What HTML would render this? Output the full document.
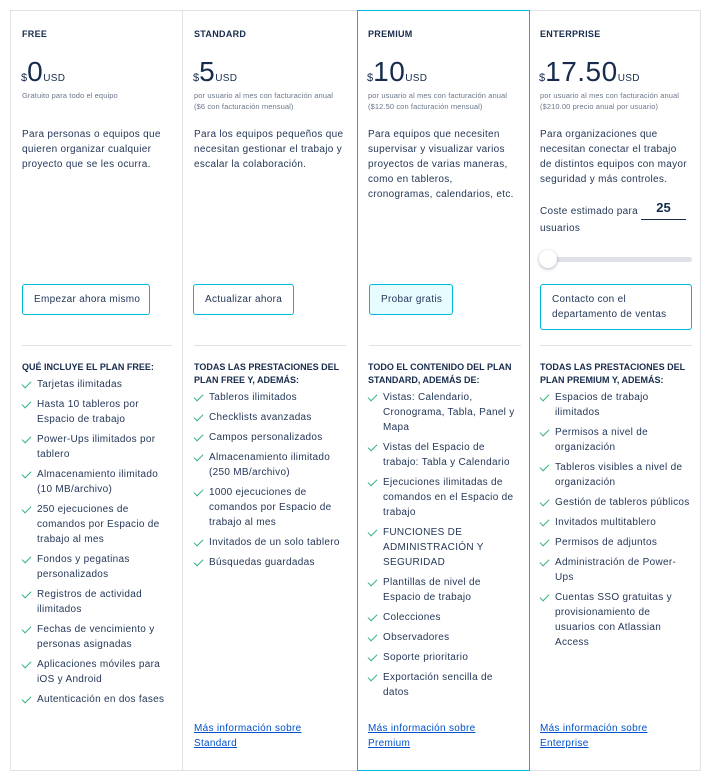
<!DOCTYPE html>
<html><head><meta charset="utf-8"><style>
*{margin:0;padding:0;box-sizing:border-box}
body{width:712px;height:781px;background:#fff;font-family:"Liberation Sans",sans-serif;color:#172b4d;position:relative;overflow:hidden}
.frame{position:absolute;left:10px;top:10px;width:691px;height:761px;border:1px solid #dfe1e6}
.col{position:absolute;top:10px;height:761px;padding:0 11px}
.sep{position:absolute;top:10px;width:1px;height:761px;background:#dfe1e6}
.prem{border:1px solid #00b8d9}
.t{position:absolute;font-size:9px;font-weight:bold;letter-spacing:.3px;top:19px}
.price{position:absolute;top:48px;white-space:nowrap}
.price .d{font-size:11px}
.price .n{font-size:28px;line-height:27px;letter-spacing:.5px}
.price .u{font-size:10px;letter-spacing:.3px}
.sub{position:absolute;top:80px;font-size:7.5px;line-height:11px;color:#6b778c;white-space:nowrap;letter-spacing:.1px}
.desc{position:absolute;top:117px;font-size:10px;line-height:15px;color:#253858;white-space:nowrap;letter-spacing:.3px}
.btn{position:absolute;top:274px;height:31px;border:1px solid #00b8d9;border-radius:3px;font-size:10px;color:#253858;padding:0 11px;line-height:29px;letter-spacing:.3px;white-space:nowrap}
.hr{position:absolute;top:335px;height:1px;background:#dfe1e6}
.fh{position:absolute;top:351px;font-size:9px;font-weight:bold;line-height:13px;white-space:nowrap}
ul{position:absolute;list-style:none;font-size:10px;line-height:15px;color:#253858;white-space:nowrap;letter-spacing:.3px}
li{position:relative;padding-left:15px;margin-bottom:5px}
li:before{content:"";position:absolute;left:2px;top:2px;width:4px;height:8px;border-right:1.5px solid #36b37e;border-bottom:1.5px solid #36b37e;transform:rotate(45deg)}
.lk{position:absolute;top:711px;font-size:10px;line-height:15px;color:#0052cc;text-decoration:underline;letter-spacing:.3px;white-space:nowrap}
</style></head><body>
<div class="frame"></div>
<div class="sep" style="left:182px"></div>
<div class="sep" style="left:529px"></div>

<div class="col" style="left:10px;width:172px">
<div class="t" style="left:12px">FREE</div>
<div class="price" style="left:11px"><span class="d">$</span><span class="n">0</span><span class="u">USD</span></div>
<div class="sub" style="left:12px">Gratuito para todo el equipo</div>
<div class="desc" style="left:12px">Para personas o equipos que<br>quieren organizar cualquier<br>proyecto que se les ocurra.</div>
<div class="btn" style="left:12px;width:128px">Empezar ahora mismo</div>
<div class="hr" style="left:12px;width:150px"></div>
<div class="fh" style="left:12px">QUÉ INCLUYE EL PLAN FREE:</div>
<ul style="left:12px;top:367px">
<li>Tarjetas ilimitadas</li>
<li>Hasta 10 tableros por<br>Espacio de trabajo</li>
<li>Power-Ups ilimitados por<br>tablero</li>
<li>Almacenamiento ilimitado<br>(10 MB/archivo)</li>
<li>250 ejecuciones de<br>comandos por Espacio de<br>trabajo al mes</li>
<li>Fondos y pegatinas<br>personalizados</li>
<li>Registros de actividad<br>ilimitados</li>
<li>Fechas de vencimiento y<br>personas asignadas</li>
<li>Aplicaciones móviles para<br>iOS y Android</li>
<li>Autenticación en dos fases</li>
</ul>
</div>

<div class="col" style="left:182px;width:175px">
<div class="t" style="left:12px">STANDARD</div>
<div class="price" style="left:11px"><span class="d">$</span><span class="n">5</span><span class="u">USD</span></div>
<div class="sub" style="left:12px">por usuario al mes con facturación anual<br>($6 con facturación mensual)</div>
<div class="desc" style="left:12px">Para los equipos pequeños que<br>necesitan gestionar el trabajo y<br>escalar la colaboración.</div>
<div class="btn" style="left:11px;width:101px">Actualizar ahora</div>
<div class="hr" style="left:12px;width:152px"></div>
<div class="fh" style="left:12px">TODAS LAS PRESTACIONES DEL<br>PLAN FREE Y, ADEMÁS:</div>
<ul style="left:12px;top:380px">
<li>Tableros ilimitados</li>
<li>Checklists avanzadas</li>
<li>Campos personalizados</li>
<li>Almacenamiento ilimitado<br>(250 MB/archivo)</li>
<li>1000 ejecuciones de<br>comandos por Espacio de<br>trabajo al mes</li>
<li>Invitados de un solo tablero</li>
<li>Búsquedas guardadas</li>
</ul>
<div class="lk" style="left:12px">Más información sobre<br>Standard</div>
</div>

<div class="col prem" style="left:357px;width:173px;height:761px">
<div class="t" style="left:10px;top:18px">PREMIUM</div>
<div class="price" style="left:9px;top:47px"><span class="d">$</span><span class="n">10</span><span class="u">USD</span></div>
<div class="sub" style="left:10px;top:79px">por usuario al mes con facturación anual<br>($12.50 con facturación mensual)</div>
<div class="desc" style="left:10px;top:116px">Para equipos que necesiten<br>supervisar y visualizar varios<br>proyectos de varias maneras,<br>como en tableros,<br>cronogramas, calendarios, etc.</div>
<div class="btn" style="left:11px;width:84px;top:273px;background:#e6fcff">Probar gratis</div>
<div class="hr" style="left:11px;width:152px;top:334px"></div>
<div class="fh" style="left:10px;top:350px">TODO EL CONTENIDO DEL PLAN<br>STANDARD, ADEMÁS DE:</div>
<ul style="left:10px;top:379px">
<li>Vistas: Calendario,<br>Cronograma, Tabla, Panel y<br>Mapa</li>
<li>Vistas del Espacio de<br>trabajo: Tabla y Calendario</li>
<li>Ejecuciones ilimitadas de<br>comandos en el Espacio de<br>trabajo</li>
<li>FUNCIONES DE<br>ADMINISTRACIÓN Y<br>SEGURIDAD</li>
<li>Plantillas de nivel de<br>Espacio de trabajo</li>
<li>Colecciones</li>
<li>Observadores</li>
<li>Soporte prioritario</li>
<li>Exportación sencilla de<br>datos</li>
</ul>
<div class="lk" style="left:10px;top:710px">Más información sobre<br>Premium</div>
</div>

<div class="col" style="left:529px;width:172px">
<div class="t" style="left:11px">ENTERPRISE</div>
<div class="price" style="left:10px"><span class="d">$</span><span class="n">17.50</span><span class="u">USD</span></div>
<div class="sub" style="left:11px">por usuario al mes con facturación anual<br>($210.00 precio anual por usuario)</div>
<div class="desc" style="left:11px">Para organizaciones que<br>necesitan conectar el trabajo<br>de distintos equipos con mayor<br>seguridad y más controles.</div>
<div style="position:absolute;left:11px;top:193px;font-size:10px;line-height:17px;color:#253858;letter-spacing:.3px">Coste estimado para<br>usuarios</div>
<div style="position:absolute;left:112px;top:190px;width:45px;height:20px;border-bottom:1.5px solid #172b4d;text-align:center;font-size:13px;font-weight:bold">25</div>
<div style="position:absolute;left:11px;top:247px;width:152px;height:5px;border-radius:3px;background:#dfe1e6"></div>
<div style="position:absolute;left:10px;top:240px;width:18px;height:18px;border-radius:50%;background:#fff;box-shadow:0 1px 3px rgba(9,30,66,.35)"></div>
<div class="btn" style="left:11px;width:152px;height:46px;line-height:15px;padding-top:7px">Contacto con el<br>departamento de ventas</div>
<div class="hr" style="left:11px;width:152px"></div>
<div class="fh" style="left:11px">TODAS LAS PRESTACIONES DEL<br>PLAN PREMIUM Y, ADEMÁS:</div>
<ul style="left:11px;top:380px">
<li>Espacios de trabajo<br>ilimitados</li>
<li>Permisos a nivel de<br>organización</li>
<li>Tableros visibles a nivel de<br>organización</li>
<li>Gestión de tableros públicos</li>
<li>Invitados multitablero</li>
<li>Permisos de adjuntos</li>
<li>Administración de Power-<br>Ups</li>
<li>Cuentas SSO gratuitas y<br>provisionamiento de<br>usuarios con Atlassian<br>Access</li>
</ul>
<div class="lk" style="left:11px">Más información sobre<br>Enterprise</div>
</div>
</body></html>
